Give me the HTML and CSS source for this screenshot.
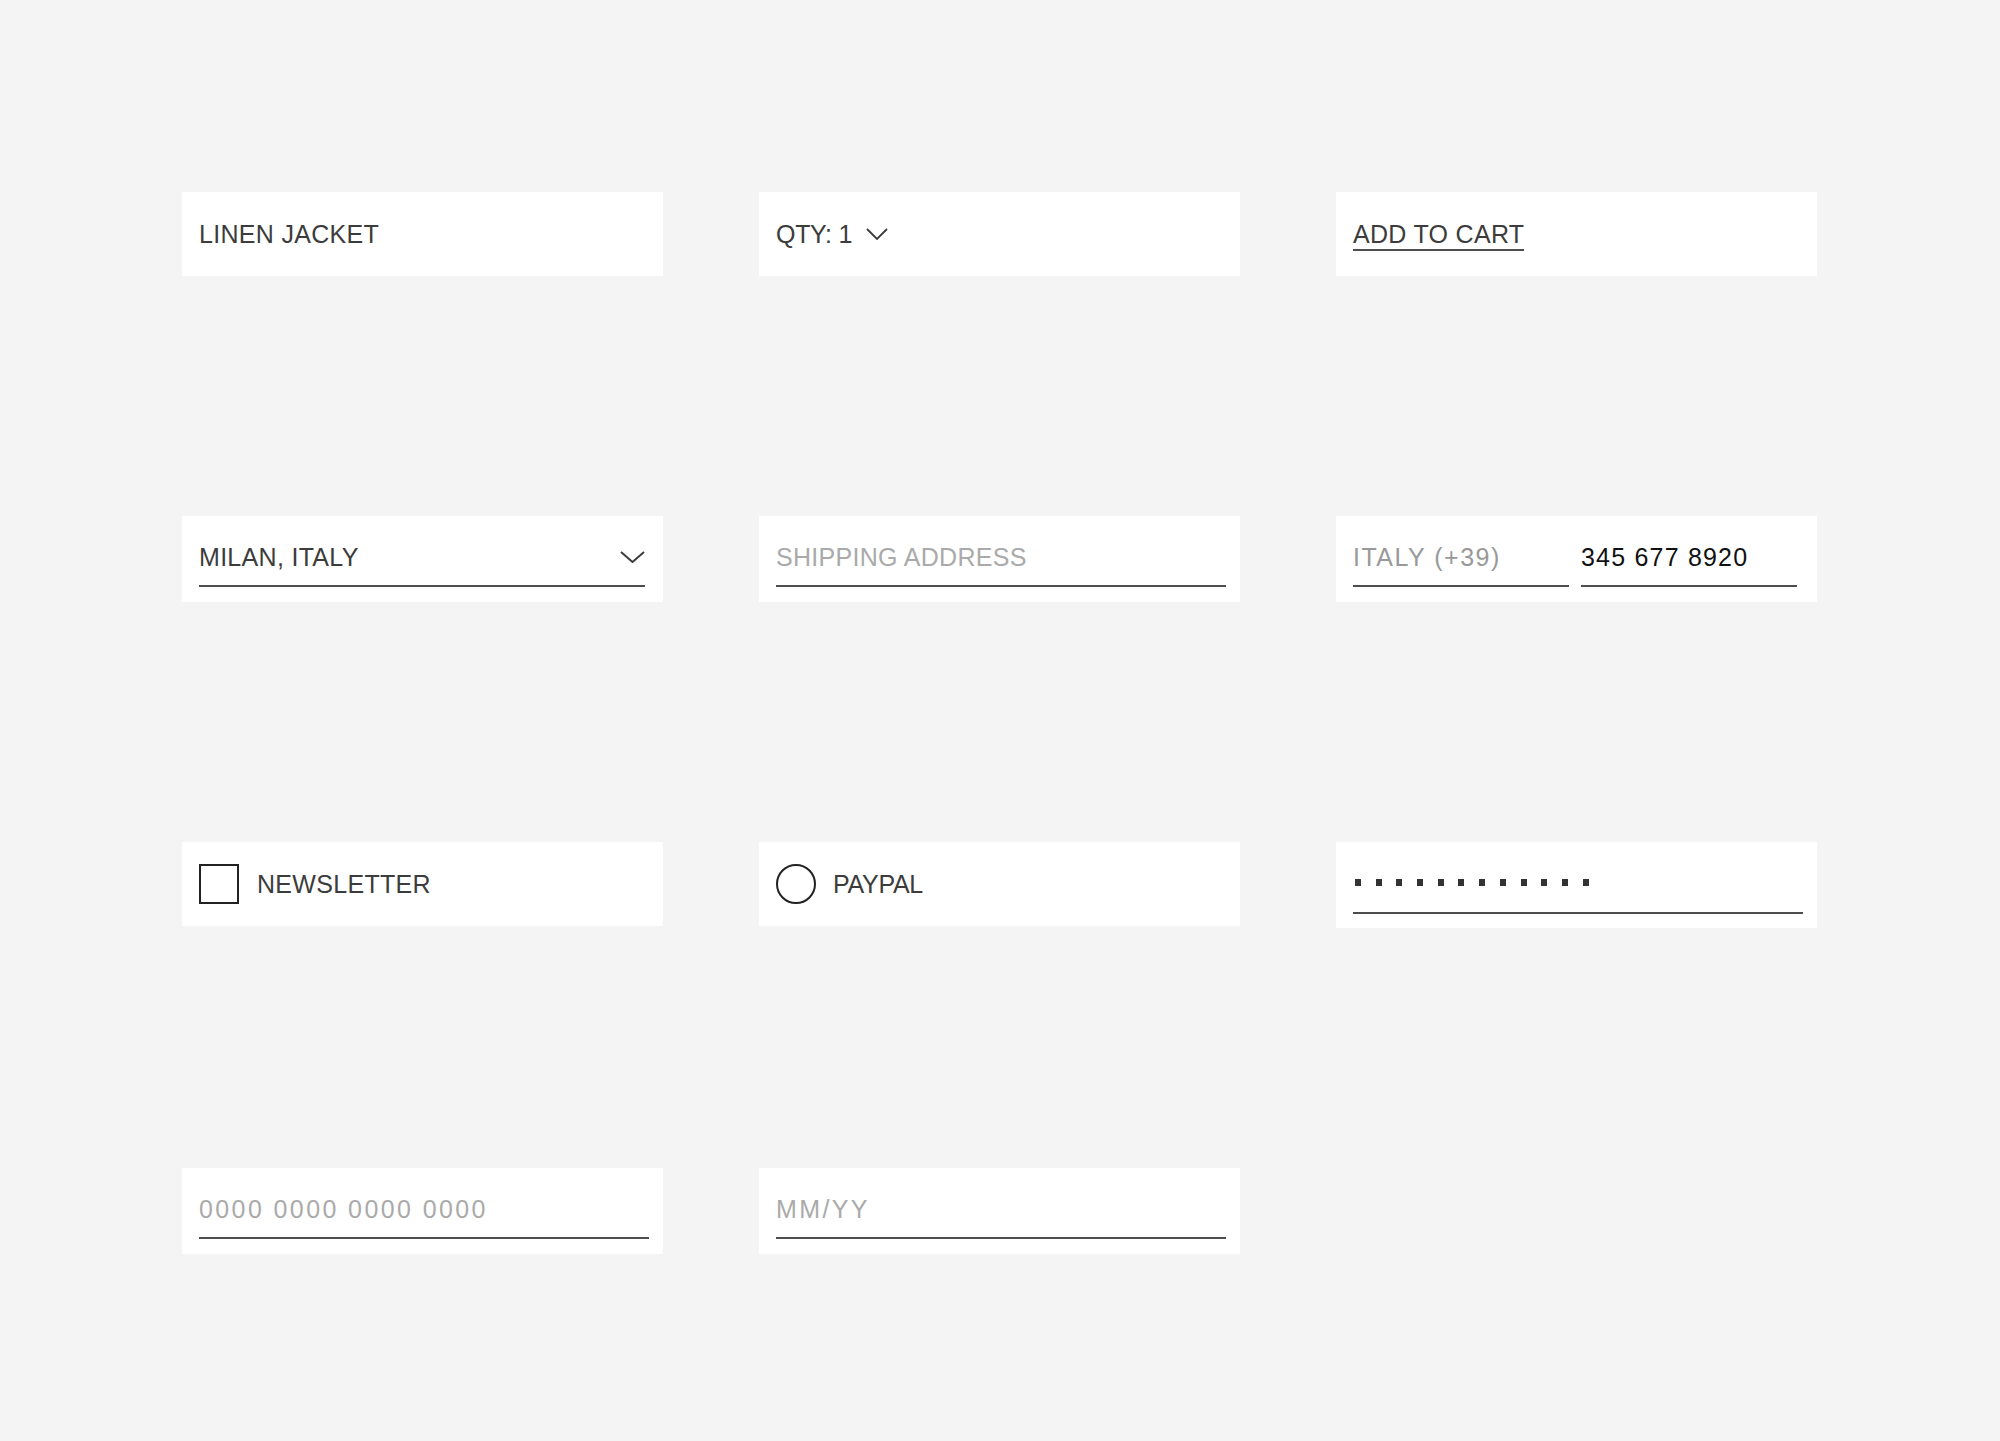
FILE: index.html
```html
<!DOCTYPE html>
<html lang="en">

<head>
    <meta charset="UTF-8">
    <meta name="viewport" content="width=device-width, initial-scale=1.0">
    <title>Form elements</title>
    <link rel="stylesheet" href="styles.css">
</head>

<body>
    <main class="grid">
        <!-- row 1 -->
        <div class="card card--plain">
            <span class="label">LINEN JACKET</span>
        </div>
        <div class="card card--plain">
            <span class="label tight">QTY: 1</span>
            <svg class="qty-arrow" width="22" height="12" viewBox="0 0 22 12">
                <polyline points="1,1 11,11 21,1" fill="none" stroke="#3c3c3c" stroke-width="1.8" />
            </svg>
        </div>
        <div class="card card--plain">
            <a class="cta" href="#">ADD TO CART</a>
        </div>

        <!-- row 2 -->
        <div class="card card--field pad-18">
            <div class="field field--select">
                <span class="label">MILAN, ITALY</span>
                <svg width="25" height="12" viewBox="0 0 25 12">
                    <polyline points="1,1 12.5,11 24,1" fill="none" stroke="#3c3c3c" stroke-width="2" />
                </svg>
            </div>
        </div>
        <div class="card card--field">
            <div class="field"><span class="placeholder">SHIPPING ADDRESS</span></div>
        </div>
        <div class="card card--field pad-20">
            <div class="field"><span class="prefix">ITALY (+39)</span></div>
            <div class="field"><span class="number">345 677 8920</span></div>
        </div>

        <!-- row 3 -->
        <div class="card card--plain">
            <span class="checkbox"></span>
            <span class="label">NEWSLETTER</span>
        </div>
        <div class="card card--plain">
            <span class="radio"></span>
            <span class="label tight">PAYPAL</span>
        </div>
        <div class="card card--secret">
            <div class="field field--secret">
                <span class="dot"></span><span class="dot"></span><span class="dot"></span>
                <span class="dot"></span><span class="dot"></span><span class="dot"></span>
                <span class="dot"></span><span class="dot"></span><span class="dot"></span>
                <span class="dot"></span><span class="dot"></span><span class="dot"></span>
            </div>
        </div>

        <!-- row 4 -->
        <div class="card card--field">
            <div class="field"><span class="placeholder spaced">0000 0000 0000 0000</span></div>
        </div>
        <div class="card card--field">
            <div class="field"><span class="placeholder spaced">MM/YY</span></div>
        </div>
    </main>
</body>

</html>
```

FILE: styles.css
```css
body {
    margin: 0;
    background-color: #f4f4f4;
    font-family: "Liberation Sans", Arial, sans-serif;
    font-size: 25px;
    color: #3c3c3c;
}

.grid {
    display: grid;
    grid-template-columns: repeat(3, 481px);
    column-gap: 96px;
    row-gap: 240px;
    align-items: start;
    padding: 192px 0 0 182px;
}

.card {
    background-color: #fff;
    box-sizing: border-box;
    display: flex;
}

.card--plain {
    height: 84px;
    align-items: center;
    padding: 0 17px;
}

.card--field {
    padding: 26px 14px 15px 17px;
    gap: 12px;
}
.pad-18 { padding-right: 18px; }
.pad-20 { padding-right: 20px; }

.card--secret {
    padding: 37px 14px 14px 17px;
}

.label, .placeholder, .prefix, .number, .cta {
    line-height: 30px;
    letter-spacing: 0.3px;
    white-space: nowrap;
}
.tight { letter-spacing: -0.3px; }

.field {
    flex: 1;
    display: flex;
    align-items: center;
    justify-content: space-between;
    padding-bottom: 13px;
    border-bottom: 2px solid #4d4d4d;
}

.field--secret {
    justify-content: flex-start;
    gap: 14.7px;
    padding-left: 2px;
    padding-bottom: 26px;
}

.dot {
    width: 6px;
    height: 7px;
    background-color: #333;
}

.placeholder { color: #aaa; }
.spaced { letter-spacing: 2.4px; }
.prefix { color: #999; letter-spacing: 1.5px; }
.number { color: #111; letter-spacing: 1.2px; }

.qty-arrow { margin-left: 14px; }

.cta {
    color: #3c3c3c;
    text-decoration: none;
    border-bottom: 2px solid #4d4d4d;
    line-height: 30px;
    margin-top: 2px;
}

.checkbox, .radio {
    width: 40px;
    height: 40px;
    box-sizing: border-box;
    border: 2px solid #222;
    margin-right: 18px;
    flex-shrink: 0;
}
.radio { margin-right: 17px; border-radius: 50%; }
```
